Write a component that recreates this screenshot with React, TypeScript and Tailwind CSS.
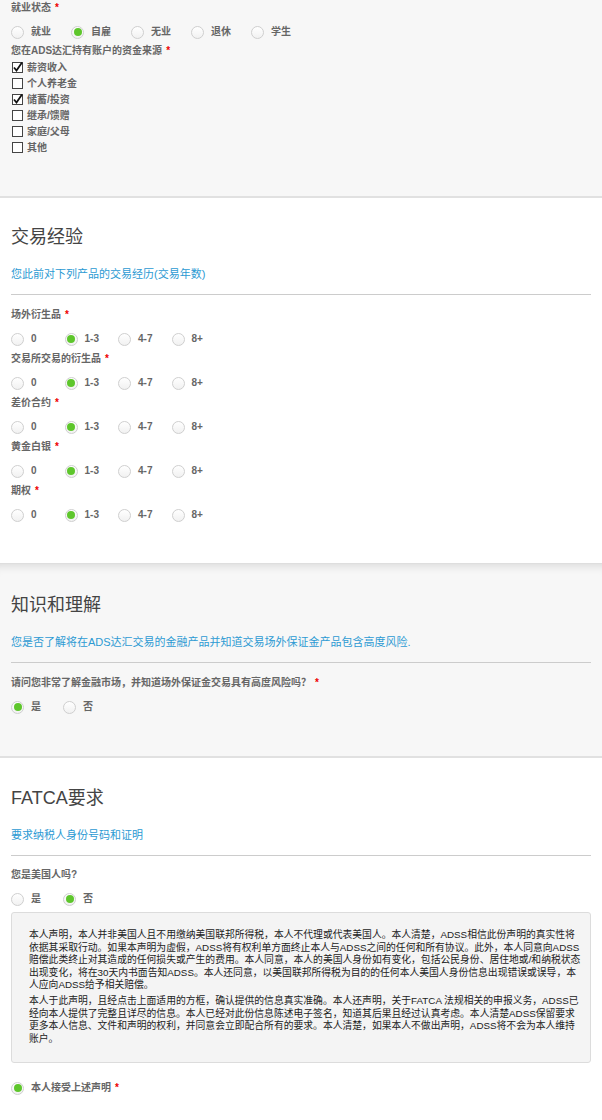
import React from 'react';

const font = "font-['Liberation_Sans','Noto_Sans_CJK_SC',sans-serif]";

function Radio({ checked }: { checked?: boolean }) {
  return (
    <span className="w-[13px] h-[13px] shrink-0 rounded-full border border-[#cfcfcf] bg-gradient-to-b from-white to-[#f1f1f1] flex items-center justify-center">
      {checked && <span className="w-[8px] h-[8px] rounded-full bg-[#5ec62c]" />}
    </span>
  );
}

function Checkbox({ checked }: { checked?: boolean }) {
  return (
    <span className="relative w-[11px] h-[11px] shrink-0 border border-[#444] bg-white">
      {checked && (
        <svg className="absolute -left-[1px] -top-[2px]" width="12" height="12" viewBox="0 0 12 12">
          <path d="M2 6.5 L4.5 9.5 L10 1.5" fill="none" stroke="#111" strokeWidth="1.8" />
        </svg>
      )}
    </span>
  );
}

function Label({ text, required, className = '' }: { text: string; required?: boolean; className?: string }) {
  return (
    <div className={`h-[14px] leading-[14px] text-[10px] font-bold text-[#666] ${className}`}>
      {text}
      {required && <span className="ml-[4px] text-[#e00]">*</span>}
    </div>
  );
}

function RadioRow({
  options,
  selected,
  itemClass,
  className = '',
}: {
  options: string[];
  selected: number;
  itemClass: string;
  className?: string;
}) {
  return (
    <div className={`flex h-[14px] items-center ${className}`}>
      {options.map((o, i) => (
        <div key={o} className={`flex items-center gap-[7px] ${itemClass}`}>
          <Radio checked={i === selected} />
          <span className="text-[10px] font-bold text-[#666] leading-[14px]">{o}</span>
        </div>
      ))}
    </div>
  );
}

function SectionHead({ title, subtitle }: { title: string; subtitle: string }) {
  return (
    <>
      <div className="h-[20px] leading-[20px] text-[18px] text-[#444]">{title}</div>
      <div className="mt-[20px] h-[14px] leading-[14px] text-[11px] text-[#2c9ad3]">{subtitle}</div>
      <div className="mt-[13px] h-px bg-[#cccccc]" />
    </>
  );
}

const products = ['场外衍生品', '交易所交易的衍生品', '差价合约', '黄金白银', '期权'];
const sources = [
  { t: '薪资收入', c: true },
  { t: '个人养老金', c: false },
  { t: '储蓄/投资', c: true },
  { t: '继承/馈赠', c: false },
  { t: '家庭/父母', c: false },
  { t: '其他', c: false },
];

export default function App() {
  return (
    <div className={`w-[602px] min-h-[1120px] bg-white ${font}`}>
      <section className="bg-[#f7f7f7] border-b-2 border-[#e1e1e1] px-[11px] pt-[1px] pb-[41px]">
        <Label text="就业状态" required />
        <RadioRow
          className="mt-[10px]"
          options={['就业', '自雇', '无业', '退休', '学生']}
          selected={1}
          itemClass="w-[60px]"
        />
        <Label className="mt-[5px]" text="您在ADS达汇持有账户的资金来源" required />
        <div className="mt-[1px] pl-[1px]">
          {sources.map((s) => (
            <div key={s.t} className="h-[16px] flex items-center gap-[4px]">
              <Checkbox checked={s.c} />
              <span className="text-[10px] font-bold text-[#666]">{s.t}</span>
            </div>
          ))}
        </div>
      </section>

      <section className="bg-white px-[11px] pt-[29px] pb-[41px]">
        <SectionHead title="交易经验" subtitle="您此前对下列产品的交易经历(交易年数)" />
        <div className="mt-[13px]">
          {products.map((p, i) => (
            <div key={p} className={i > 0 ? 'mt-[6px]' : ''}>
              <Label text={p} required />
              <RadioRow className="mt-[10px]" options={['0', '1-3', '4-7', '8+']} selected={1} itemClass="w-[53.5px]" />
            </div>
          ))}
        </div>
      </section>

      <section className="bg-[#f7f7f7] border-t border-[#dedede] border-b-2 border-b-[#e1e1e1] shadow-[inset_0_10px_10px_-8px_rgba(0,0,0,0.12)] px-[11px] pt-[31px] pb-[42px]">
        <SectionHead title="知识和理解" subtitle="您是否了解将在ADS达汇交易的金融产品并知道交易场外保证金产品包含高度风险." />
        <Label className="mt-[13px]" text="请问您非常了解金融市场，并知道场外保证金交易具有高度风险吗？" required />
        <RadioRow className="mt-[10px]" options={['是', '否']} selected={0} itemClass="w-[52px]" />
      </section>

      <section className="bg-white px-[11px] pt-[30px] pb-[30px]">
        <SectionHead title="FATCA要求" subtitle="要求纳税人身份号码和证明" />
        <Label className="mt-[12px]" text="您是美国人吗?" />
        <RadioRow className="mt-[10px]" options={['是', '否']} selected={1} itemClass="w-[52px]" />
        <div className="mt-[6px] rounded-[3px] border border-[#dcdcdc] bg-[#f4f4f4] pl-[17px] pr-[10px] pt-[16px] pb-[17px] text-[9.8px] leading-[12.5px] text-[#222] whitespace-nowrap">
          <p>
            本人声明，本人并非美国人且不用缴纳美国联邦所得税，本人不代理或代表美国人。本人清楚，ADSS相信此份声明的真实性将
            <br />
            依据其采取行动。如果本声明为虚假，ADSS将有权利单方面终止本人与ADSS之间的任何和所有协议。此外，本人同意向ADSS
            <br />
            赔偿此类终止对其造成的任何损失或产生的费用。本人同意，本人的美国人身份如有变化，包括公民身份、居住地或/和纳税状态
            <br />
            出现变化，将在30天内书面告知ADSS。本人还同意，以美国联邦所得税为目的的任何本人美国人身份信息出现错误或误导，本
            <br />
            人应向ADSS给予相关赔偿。
          </p>
          <p className="mt-[3.5px]">
            本人于此声明，且经点击上面适用的方框，确认提供的信息真实准确。本人还声明，关于FATCA 法规相关的申报义务，ADSS已
            <br />
            经向本人提供了完整且详尽的信息。本人已经对此份信息陈述电子签名，知道其后果且经过认真考虑。本人清楚ADSS保留要求
            <br />
            更多本人信息、文件和声明的权利，并同意会立即配合所有的要求。本人清楚，如果本人不做出声明，ADSS将不会为本人维持
            <br />
            账户。
          </p>
        </div>
        <div className="mt-[18px] flex items-center gap-[7px]">
          <Radio checked />
          <Label text="本人接受上述声明" required />
        </div>
      </section>
    </div>
  );
}
